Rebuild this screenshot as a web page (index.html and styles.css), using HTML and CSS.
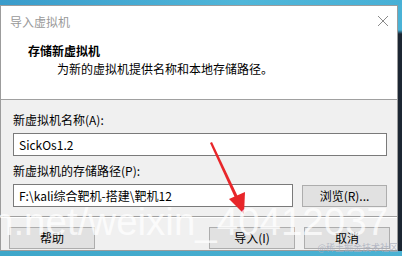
FILE: index.html
```html
<!DOCTYPE html>
<html lang="zh-CN">

<head>
  <meta charset="UTF-8" />
  <title>导入虚拟机</title>
  <link rel="stylesheet" href="styles.css">
</head>

<body>
  <div class="screen">
    <div class="strip-top"></div>

    <div class="window">
      <div class="titlebar">
        <span class="title">导入虚拟机</span>
        <svg class="close" width="12" height="12" viewBox="0 0 12 12">
          <path d="M1 1 L11 11 M11 1 L1 11" stroke="#8a8a8a" stroke-width="1" fill="none" />
        </svg>
      </div>

      <div class="header">
        <h1>存储新虚拟机</h1>
        <p>为新的虚拟机提供名称和本地存储路径。</p>
      </div>

      <div class="body">
        <label class="label">新虚拟机名称(A):</label>
        <div class="field field-name">SickOs1.2</div>

        <label class="label label-path">新虚拟机的存储路径(P):</label>
        <div class="path-row">
          <div class="field field-path">F:\kali综合靶机-搭建\靶机12</div>
          <button class="btn btn-browse">浏览(R)...</button>
        </div>
      </div>

      <div class="separator"></div>

      <div class="actions">
        <button class="btn">帮助</button>
        <div class="right">
          <button class="btn">导入(I)</button>
          <button class="btn">取消</button>
        </div>
      </div>
    </div>

    <div class="strip-bottom"></div>

    <!-- things pasted on top of the screenshot -->
    <svg class="arrow" width="402" height="256" viewBox="0 0 402 256">
      <polygon points="210,143 212,142 239,199 236,200" fill="#e8262a" />
      <polygon points="244,214 229,199 245,192" fill="#e8262a" />
    </svg>
    <div class="wm-big">n.net/weixin_40412037</div>
    <div class="wm-small">@稀土掘金技术社区</div>
  </div>
</body>

</html>
```

FILE: styles.css
```css
* {
  margin: 0;
  padding: 0;
  box-sizing: border-box;
}

body {
  font-family: "Noto Sans CJK SC", "Liberation Sans", sans-serif;
  font-size: 12px;
  color: #000;
  background: #1c2633;
}

.screen {
  position: relative;
  width: 402px;
  height: 256px;
  overflow: hidden;
  background: linear-gradient(#4ab2d6 0, #4ab2d6 30px, #1c2633 34px);
}

.strip-top {
  height: 5px;
  background: linear-gradient(90deg, #3a9ccb, #4fb6d9 60%, #48b0d6);
}

.strip-bottom {
  height: 5px;
  background: linear-gradient(90deg, #3ea6c9, #4cb2d3);
}

.window {
  width: 398px;
  height: 246px;
  border: 1px solid #9c9c9c;
  background: #f0f0f0;
  display: flex;
  flex-direction: column;
}

.titlebar {
  height: 31px;
  background: #fff;
  display: flex;
  align-items: center;
  justify-content: space-between;
  padding: 0 8px 0 9px;
}

.title {
  color: #999;
  font-size: 12px;
}

.close {
  margin-top: -1px;
}

.header {
  background: #fff;
  padding: 6px 0 22px 27px;
  border-bottom: 1px solid #a0a0a0;
  line-height: 16px;
}

.header h1 {
  font-size: 12px;
  font-weight: bold;
}

.header p {
  padding-left: 29px;
  margin-top: 2px;
}

.body {
  padding: 12px 10px 0 12px;
  display: flex;
  flex-direction: column;
}

.label {
  line-height: 16px;
  color: #000;
}

.label-path {
  margin-top: 7px;
}

.field {
  background: #fff;
  border: 1px solid #7a7a7a;
  height: 23px;
  line-height: 21px;
  padding-left: 5px;
  white-space: nowrap;
}

.field-name {
  margin-top: 5px;
  width: 374px;
}

.path-row {
  margin-top: 5px;
  display: flex;
  gap: 9px;
  align-items: flex-start;
}

.field-path {
  width: 280px;
}

.btn {
  font-family: "Noto Sans CJK SC", "Liberation Sans", sans-serif;
  font-size: 12px;
  color: #000;
  background: #e1e1e1;
  border: 1px solid #adadad;
  height: 22px;
  width: 86px;
  line-height: 20px;
}

.btn-browse {
  width: 85px;
  margin-top: 1px;
}

.separator {
  margin-top: 9px;
  height: 2px;
  border-top: 1px solid #a0a0a0;
  border-bottom: 1px solid #fff;
}

.actions {
  display: flex;
  justify-content: space-between;
  padding: 9px 7px 0 8px;
}

.right {
  display: flex;
  gap: 9px;
}

.arrow {
  position: absolute;
  left: 0;
  top: 0;
}

.wm-big {
  position: absolute;
  left: -8px;
  top: 200px;
  font-family: "Liberation Sans", sans-serif;
  font-size: 38.5px;
  line-height: 44px;
  color: rgba(255, 255, 255, 0.75);
  white-space: nowrap;
  pointer-events: none;
}

.wm-small {
  position: absolute;
  right: 4px;
  top: 242px;
  font-size: 9px;
  line-height: 11px;
  color: rgba(170, 175, 190, 0.85);
  white-space: nowrap;
}
```
